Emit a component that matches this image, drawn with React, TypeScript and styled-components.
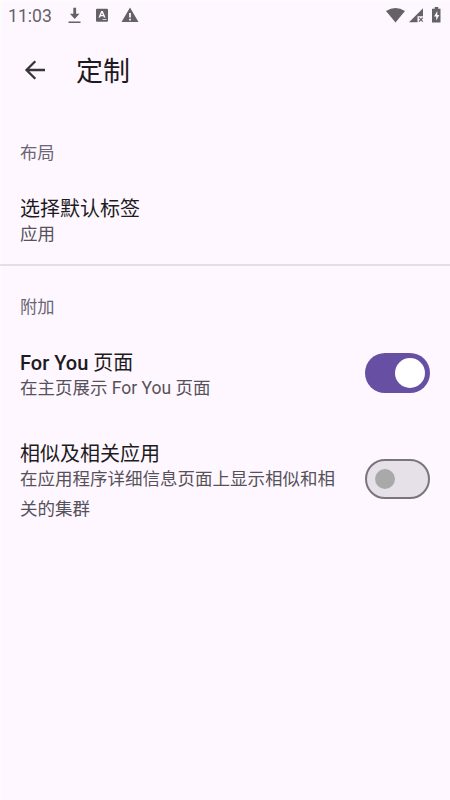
import React from 'react';
import styled, { createGlobalStyle } from 'styled-components';

const GlobalStyle = createGlobalStyle`
  * { box-sizing: border-box; }
  body {
    margin: 0;
    background: #fef7ff;
    font-family: Roboto, "Noto Sans CJK SC", sans-serif;
  }
`;

const Screen = styled.main`
  display: flex;
  flex-direction: column;
  height: 800px;
  background: #fef7ff;
  border-left: 2px solid #fefbfe;
  border-top: 2px solid #fefbfe;
`;

const StatusBar = styled.header`
  display: flex;
  align-items: center;
  height: 28px;
  padding: 0 7px 0 6px;
  color: #656267;
`;

const Clock = styled.span`
  width: 60px;
  font-size: 17.6px;
  line-height: 28px;
`;

const StatusIcons = styled.div<{ $end?: boolean }>`
  display: flex;
  align-items: center;
  gap: ${p => (p.$end ? 0 : 10.5)}px;
  margin-left: ${p => (p.$end ? 'auto' : 0)};
  svg { display: block; fill: currentColor; }
`;

const AppBar = styled.div`
  display: flex;
  align-items: center;
  height: 80px;
  padding-left: 22px;
  gap: 30px;
`;

const BackButton = styled.button`
  display: flex;
  width: 22px;
  padding: 0;
  border: 0;
  background: none;
  color: #37343a;
`;

const Title = styled.h1`
  margin: 3px 0 0;
  font-size: 27px;
  font-weight: 400;
  line-height: 40px;
  color: #1d1b20;
`;

const Section = styled.section<{ $divided?: boolean }>`
  display: flex;
  flex-direction: column;
  padding: ${p => (p.$divided ? 26 : 28)}px 20px 0 18px;
  ${p => p.$divided && 'margin-top: 15px; border-top: 2px solid #e4dfe5; margin-left: -2px; padding-left: 20px;'}
`;

const SectionLabel = styled.h2`
  margin: 0 0 28px;
  font-size: 17.3px;
  font-weight: 400;
  line-height: 30px;
  color: #6a6574;
`;

const Preference = styled.div`
  display: flex;
  align-items: center;
  justify-content: space-between;
  & + & { margin-top: 38px; }
`;

const Copy = styled.div`
  width: 322px;
`;

const Name = styled.div`
  font-size: 20px;
  font-weight: 500;
  line-height: 26px;
  color: #1d1b20;
`;

const Cjk = styled.span`
  font-weight: 400;
`;

const Summary = styled.div`
  font-size: 17.5px;
  line-height: 30px;
  margin-top: -3px;
  color: #56525a;
`;

const Track = styled.button<{ $on: boolean }>`
  display: flex;
  align-items: center;
  justify-content: ${p => (p.$on ? 'flex-end' : 'flex-start')};
  width: 65px;
  height: 40px;
  margin-bottom: 7px;
  padding: 0 ${p => (p.$on ? 5 : 8)}px;
  border-radius: 20px;
  border: ${p => (p.$on ? '0' : '2px solid #79747e')};
  background: ${p => (p.$on ? '#6750a4' : '#e6e0e9')};
`;

const Thumb = styled.span<{ $on: boolean }>`
  width: ${p => (p.$on ? 30 : 20)}px;
  height: ${p => (p.$on ? 30 : 20)}px;
  border-radius: 50%;
  background: ${p => (p.$on ? '#fff' : '#a9a9a9')};
`;

function Switch({ on, label }: { on: boolean; label: string }) {
  return (
    <Track $on={on} role="switch" aria-checked={on} aria-label={label}>
      <Thumb $on={on} />
    </Track>
  );
}

export default function App() {
  return (
    <>
      <GlobalStyle />
      <Screen>
        <StatusBar>
          <Clock>11:03</Clock>
          <StatusIcons>
            <svg width="14" height="18" viewBox="0 0 14 18">
              <path d="M5.3 .8h2.8v6H11.500L6.700 12 1.900 6.800h3.400zM.5 14.500h12v1.500H.5z" />
            </svg>
            <svg width="18" height="18" viewBox="0 0 18 18">
              <path
                fillRule="evenodd"
                d="M4 1.800h10q1 0 1 1v11q0 1-1 1H4q-1 0-1-1v-11q0-1 1-1zM8.200 4 5.500 10.500h1.600l.5-1.300h2.800l.5 1.300h1.600L9.800 4zM9 5.800 9.900 8H8.100zM9.500 12.200h4v.7h-4z"
              />
            </svg>
            <svg width="18" height="18" viewBox="0 0 18 18">
              <path fillRule="evenodd" d="M9 .5 17.500 15H.5zM8.100 6V10.500h1.800V6zM8.100 11.700v1.800h1.800v-1.800z" />
            </svg>
          </StatusIcons>
          <StatusIcons $end>
            <svg width="21" height="18" viewBox="0 0 21 18">
              <path d="M0 4Q9.500-2.200 19 4L9.500 15.500z" />
            </svg>
            <svg width="21" height="18" viewBox="0 0 21 18">
              <path d="M16 1.300V9.300h-5.500V15.300H2z" />
              <path d="m12 10.700 3.800 4m0-4-3.800 4" stroke="currentColor" strokeWidth="1.200" />
            </svg>
            <svg width="15" height="18" viewBox="0 0 15 18">
              <path
                fillRule="evenodd"
                d="M6.700 0h3.600v1.700h2.200V15.500H4V1.700h2.700zM9.300 4 6 9.500h2.200V13.500l3.100-5.500H9.300z"
              />
            </svg>
          </StatusIcons>
        </StatusBar>
        <AppBar>
          <BackButton aria-label="返回">
            <svg width="22" height="22" viewBox="0 0 22 22" fill="none" stroke="currentColor" strokeWidth="2.300">
              <path d="M21 11H3M11.300 2.200 2.500 11l8.800 8.800" />
            </svg>
          </BackButton>
          <Title>定制</Title>
        </AppBar>
        <Section>
          <SectionLabel>布局</SectionLabel>
          <Preference>
            <Copy>
              <Name><Cjk>选择默认标签</Cjk></Name>
              <Summary>应用</Summary>
            </Copy>
          </Preference>
        </Section>
        <Section $divided>
          <SectionLabel>附加</SectionLabel>
          <Preference>
            <Copy>
              <Name>For You <Cjk>页面</Cjk></Name>
              <Summary>在主页展示 For You 页面</Summary>
            </Copy>
            <Switch on label="For You 页面" />
          </Preference>
          <Preference>
            <Copy>
              <Name><Cjk>相似及相关应用</Cjk></Name>
              <Summary>在应用程序详细信息页面上显示相似和相关的集群</Summary>
            </Copy>
            <Switch on={false} label="相似及相关应用" />
          </Preference>
        </Section>
      </Screen>
    </>
  );
}
